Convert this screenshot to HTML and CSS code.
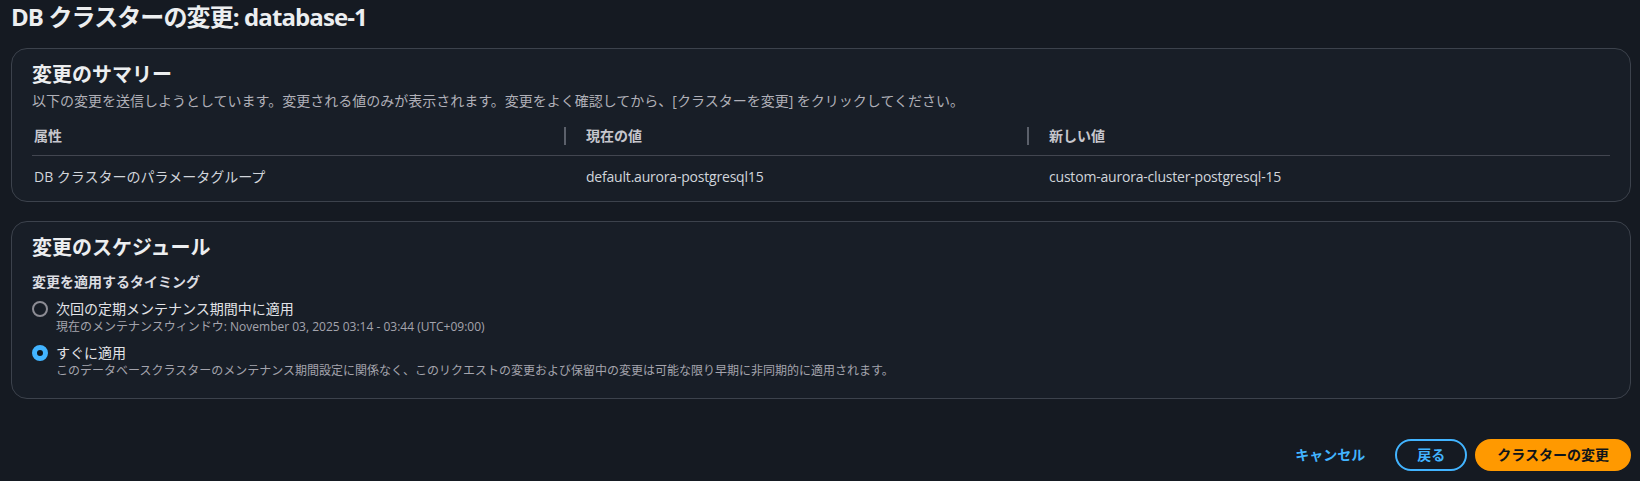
FILE: index.html
```html
<!DOCTYPE html>
<html lang="ja">
<head>
<meta charset="UTF-8">
<meta name="viewport" content="width=device-width, initial-scale=1.0">
<title>DB クラスターの変更: database-1</title>
<link rel="stylesheet" href="styles.css">
</head>
<body>

<h1 class="page-title">DB クラスターの変更: database-1</h1>

<!-- 変更のサマリー -->
<section class="card">
    <h2 class="card-title">変更のサマリー</h2>
    <p class="card-desc">以下の変更を送信しようとしています。変更される値のみが表示されます。変更をよく確認してから、[クラスターを変更] をクリックしてください。</p>
    <table class="summary">
        <thead>
            <tr>
                <th class="col-attr"><span>属性</span></th>
                <th class="col-cur"><span class="sep">現在の値</span></th>
                <th class="col-new"><span class="sep">新しい値</span></th>
            </tr>
        </thead>
        <tbody>
            <tr>
                <td class="col-attr">DB クラスターのパラメータグループ</td>
                <td class="col-cur latin">default.aurora-postgresql15</td>
                <td class="col-new latin">custom-aurora-cluster-postgresql-15</td>
            </tr>
        </tbody>
    </table>
</section>

<!-- 変更のスケジュール -->
<section class="card card-schedule">
    <h2 class="card-title">変更のスケジュール</h2>
    <div class="field-label">変更を適用するタイミング</div>
    <div class="radio-group">
        <label class="radio">
            <span class="radio-dot"></span>
            <span class="radio-text">
                <span class="radio-label">次回の定期メンテナンス期間中に適用</span>
                <span class="radio-desc">現在のメンテナンスウィンドウ: November 03, 2025 03:14 - 03:44 (UTC+09:00)</span>
            </span>
        </label>
        <label class="radio">
            <span class="radio-dot checked"></span>
            <span class="radio-text">
                <span class="radio-label">すぐに適用</span>
                <span class="radio-desc">このデータベースクラスターのメンテナンス期間設定に関係なく、このリクエストの変更および保留中の変更は可能な限り早期に非同期的に適用されます。</span>
            </span>
        </label>
    </div>
</section>

<div class="actions">
    <button class="btn btn-link">キャンセル</button>
    <button class="btn btn-normal">戻る</button>
    <button class="btn btn-primary">クラスターの変更</button>
</div>

</body>
</html>
```

FILE: styles.css
```css
/* ダークテーマ */
body {
    margin: 0;
    padding: 0 9px 0 11px;
    background-color: #151a22;
    color: #d1d5db;
    font-family: "Open Sans", "Noto Sans CJK JP", sans-serif;
    font-size: 14px;
    line-height: 20px;
}
.page-title {
    margin: 0;
    padding-top: 2px;
    font-size: 24px;
    line-height: 30px;
    font-weight: 700;
    color: #eceef0;
    letter-spacing: -0.9px;
}
.card {
    margin-top: 16px;
    background-color: #181e27;
    border: 1px solid #3c424c;
    border-radius: 16px;
    padding: 14px 20px 5px;
}
.card-schedule {
    margin-top: 19px;
    padding-bottom: 19px;
}
.card-title {
    margin: 0;
    font-size: 20px;
    line-height: 24px;
    font-weight: 700;
    color: #eceef0;
}
.card-desc {
    margin: 4px 0 0;
    color: #b0b0b8;
}
table.summary {
    width: 100%;
    border-collapse: collapse;
    margin-top: 6px;
}
.summary th {
    padding: 10px 0;
    border-bottom: 1px solid #424650;
    text-align: left;
    font-weight: 700;
    color: #c6c6cd;
}
.summary th span {
    display: block;
    line-height: 18px;
}
.summary th .sep {
    border-left: 2px solid #5b606a;
    padding-left: 20px;
}
.summary td {
    padding: 11px 0 9px 22px;
    color: #d1d5db;
}
.summary td.latin {
    letter-spacing: -0.2px;
}
.summary th.col-attr span, .summary td.col-attr {
    padding-left: 2px;
}
.col-attr { width: 530px; }
.col-cur { width: 441px; }
.field-label {
    margin-top: 12px;
    font-weight: 700;
    color: #dcdde2;
}
.radio-group {
    margin-top: 7px;
    display: flex;
    flex-direction: column;
    gap: 8px;
}
.radio {
    display: flex;
    gap: 8px;
    cursor: pointer;
}
.radio-dot {
    flex: none;
    width: 16px;
    height: 16px;
    margin-top: 2px;
    box-sizing: border-box;
    border: 2px solid #8c8c94;
    border-radius: 50%;
}
.radio-dot.checked {
    border: 5px solid #42b4ff;
    background-color: #0f141a;
}
.radio-text {
    display: flex;
    flex-direction: column;
}
.radio-label {
    color: #e2e3e7;
}
.radio-desc {
    font-size: 12px;
    line-height: 16px;
    color: #a4a4ad;
}
.actions {
    display: flex;
    justify-content: flex-end;
    gap: 8px;
    margin-top: 40px;
}
.btn {
    font-family: inherit;
    font-size: 14px;
    line-height: 20px;
    font-weight: 700;
    padding: 4px 20px;
    border: 2px solid transparent;
    border-radius: 20px;
    background: none;
    cursor: pointer;
}
.btn-link {
    color: #42b4ff;
}
.btn-normal {
    color: #42b4ff;
    border-color: #42b4ff;
}
.btn-primary {
    background-color: #ff9900;
    border-color: #ff9900;
    color: #0f141a;
}
```
